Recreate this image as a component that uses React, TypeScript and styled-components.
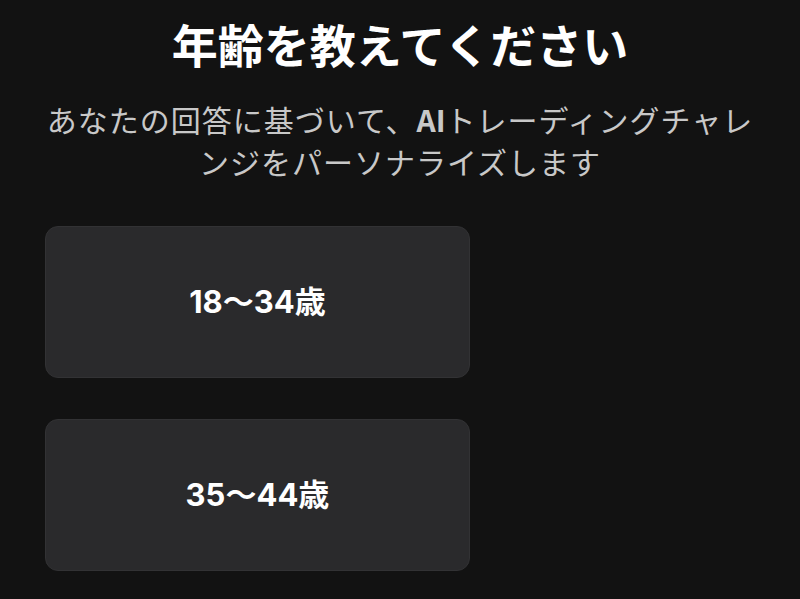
import React from 'react'
import styled, { createGlobalStyle } from 'styled-components'

const GlobalStyle = createGlobalStyle`
  html, body {
    margin: 0;
    padding: 0;
    background: #121212;
  }
  body {
    font-family: Inter, "Noto Sans CJK JP", sans-serif;
    color: #ffffff;
  }
`

const ages = ['18〜34歳', '35〜44歳']

const App: React.FC = () => {
  return (
    <Page>
      <GlobalStyle />
      <Title>年齢を教えてください</Title>
      <Subtitle>
        あなたの回答に基づいて、<strong>AI</strong>トレーディングチャレンジをパーソナライズします
      </Subtitle>
      <Options>
        {ages.map((age) => (
          <OptionCard key={age} type="button">
            {age}
          </OptionCard>
        ))}
      </Options>
    </Page>
  )
}
export default App

const Page = styled.main`
  display: flex;
  flex-direction: column;
  padding: 16px 45px 0;
  box-sizing: border-box;
  height: 599px;
  overflow: hidden;
`
const Title = styled.h1`
  margin: 0;
  text-align: center;
  font-family: "Noto Sans CJK JP", sans-serif;
  font-size: 46px;
  line-height: 54px;
  font-weight: 700;
  color: #ffffff;
`
const Subtitle = styled.p`
  margin: 28px -8px 0;
  text-align: center;
  font-family: "Noto Sans CJK JP", sans-serif;
  font-size: 30px;
  line-height: 42px;
  font-weight: 400;
  letter-spacing: 1px;
  color: #c8c8c8;
  strong {
    font-weight: 700;
    letter-spacing: 0;
  }
`
const Options = styled.div`
  display: flex;
  flex-direction: column;
  gap: 41px;
  margin-top: 44px;
`
const OptionCard = styled.button`
  width: 425px;
  height: 152px;
  flex-shrink: 0;
  display: flex;
  align-items: center;
  justify-content: center;
  background: #2a2a2c;
  border: 1px solid #323234;
  border-radius: 13px;
  color: #ffffff;
  font-family: Inter, "Noto Sans CJK JP", sans-serif;
  font-size: 31px;
  font-weight: 700;
  cursor: pointer;
  padding: 0 0 5px;
`
